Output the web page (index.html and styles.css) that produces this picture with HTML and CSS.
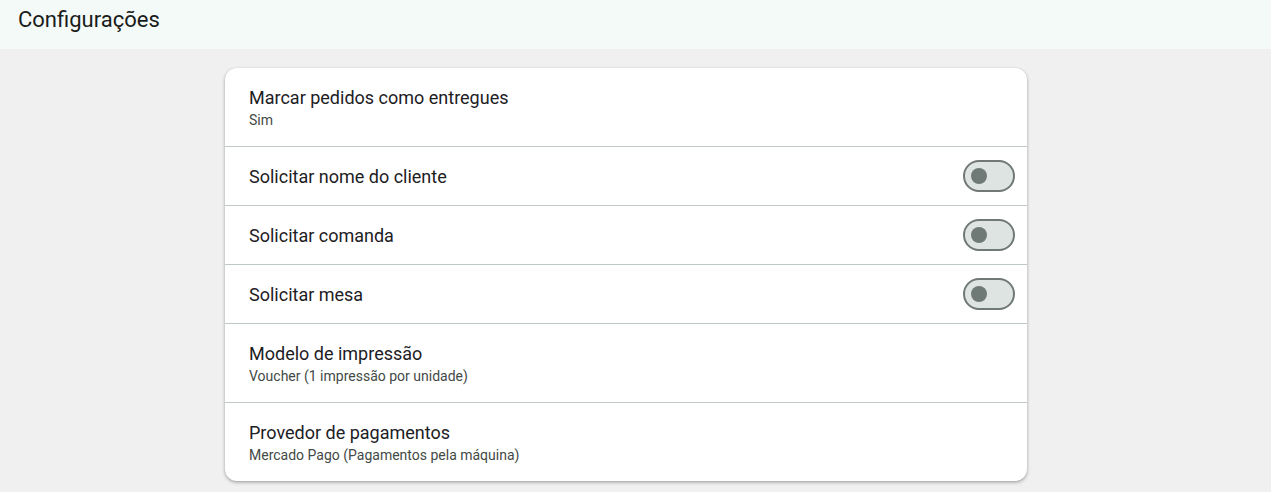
FILE: index.html
```html
<!DOCTYPE html>
<html lang="pt-BR">
<head>
<meta charset="utf-8">
<title>Configurações</title>
<link rel="stylesheet" href="styles.css">
</head>
<body>
<header class="topbar"><h1 class="title">Configurações</h1></header>
<main class="content">
  <section class="card">
    <div class="row two">
      <div class="texts"><div class="label">Marcar pedidos como entregues</div><div class="sub">Sim</div></div>
    </div>
    <div class="row one">
      <div class="texts"><div class="label">Solicitar nome do cliente</div></div>
      <span class="switch"><span class="thumb"></span></span>
    </div>
    <div class="row one">
      <div class="texts"><div class="label">Solicitar comanda</div></div>
      <span class="switch"><span class="thumb"></span></span>
    </div>
    <div class="row one">
      <div class="texts"><div class="label">Solicitar mesa</div></div>
      <span class="switch"><span class="thumb"></span></span>
    </div>
    <div class="row two">
      <div class="texts"><div class="label">Modelo de impressão</div><div class="sub">Voucher (1 impressão por unidade)</div></div>
    </div>
    <div class="row two last">
      <div class="texts"><div class="label">Provedor de pagamentos</div><div class="sub">Mercado Pago (Pagamentos pela máquina)</div></div>
    </div>
  </section>
</main>
</body>
</html>
```
FILE: styles.css
```css
html, body { margin: 0; padding: 0; }
body {
  background: #f0f0f0;
  font-family: Roboto, "Liberation Sans", sans-serif;
  color: #191c1b;
  height: 492px;
  overflow: hidden;
}
.topbar {
  height: 49px;
  background: #f4faf8;
  display: flex;
  align-items: center;
  padding: 0 18px;
  box-sizing: border-box;
}
.title {
  margin: 0 0 9px 0;
  font-size: 22px;
  font-weight: 400;
  line-height: 28px;
  color: #191c1b;
}
.content {
  display: flex;
  padding: 19px 0 0 225px;
}
.card {
  width: 802px;
  background: #fff;
  border-radius: 12px;
  box-shadow: 0 1px 3px rgba(0,0,0,0.25), 0 2px 4px rgba(0,0,0,0.12);
  overflow: hidden;
}
.row {
  display: flex;
  align-items: center;
  justify-content: space-between;
  padding: 0 12px 0 24px;
  border-bottom: 1px solid #c0c8c4;
}
.row.last { border-bottom: none; height: 79px; }
.row.two { height: 78px; }
.row.two .sub { padding-top: 1px; }
.row.one { height: 58px; }
.row.one .texts { padding-top: 2px; }
.label { font-size: 18px; line-height: 24px; color: #1d201f; }
.sub { font-size: 14px; line-height: 18px; color: #434a46; }
.switch {
  width: 52px;
  height: 32px;
  box-sizing: border-box;
  border: 2px solid #707974;
  border-radius: 16px;
  background: #dee4e1;
  display: flex;
  align-items: center;
  padding-left: 6px;
}
.thumb {
  width: 16px;
  height: 16px;
  border-radius: 50%;
  background: #6f7975;
}
```
